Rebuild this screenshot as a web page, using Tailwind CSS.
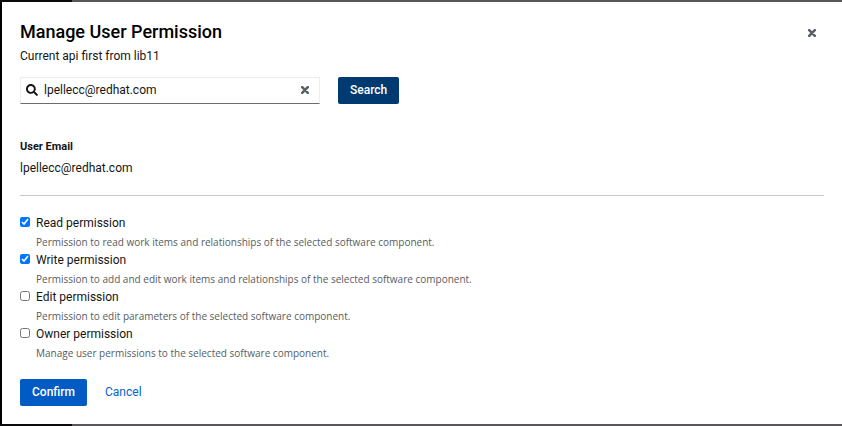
<!DOCTYPE html>
<html lang="en">
<head>
<meta charset="utf-8">
<meta name="viewport" content="width=device-width, initial-scale=1">
<title>Manage User Permission</title>
<script src="https://cdn.jsdelivr.net/npm/@tailwindcss/browser@4"></script>
</head>
<body class="min-h-screen flex flex-col bg-[linear-gradient(to_right,#0a0a0c_72px,#59575a_72px)] py-0.5 font-['Roboto','Liberation_Sans',sans-serif] text-[12px] leading-[18px] text-[#151515]">
<div class="flex-1 flex flex-col border-l-2 border-black bg-white pl-[18px] pr-[18px] pt-4" role="dialog" aria-labelledby="dialog-title" aria-describedby="dialog-description">
  <header class="flex items-start justify-between">
    <div>
      <h1 id="dialog-title" class="text-[18px] leading-7 font-medium text-black">Manage User Permission</h1>
      <p id="dialog-description" class="mt-px">Current api first from lib11</p>
    </div>
    <button type="button" aria-label="Close" class="size-6 mt-[3px] flex items-center justify-center text-[#5b6066]">
      <svg class="size-2" viewBox="0 0 8 8" fill="none" stroke="currentColor" stroke-width="2.6" stroke-linecap="round"><path d="M1.2 1.2 6.8 6.8M6.8 1.2 1.2 6.8"/></svg>
    </button>
  </header>

  <form class="mt-3 flex gap-[18px]" role="search">
    <div class="w-[300px] h-[27px] flex items-center border border-[#ededed] border-b-[#6a6e73] pl-[5px] pr-[3px] pb-0.5">
      <svg class="size-3 shrink-0" viewBox="0 0 512 512" fill="currentColor" aria-hidden="true"><path d="M505 442.700 405.300 343c-4.500-4.500-10.600-7-17-7H372c27.600-35.300 44-79.700 44-128C416 93.100 322.900 0 208 0S0 93.100 0 208s93.100 208 208 208c48.300 0 92.700-16.400 128-44v16.300c0 6.400 2.500 12.500 7 17l99.700 99.700c9.400 9.400 24.600 9.400 33.900 0l28.300-28.300c9.400-9.400 9.400-24.600.1-34zM208 336c-70.700 0-128-57.200-128-128 0-70.700 57.200-128 128-128 70.700 0 128 57.200 128 128 0 70.700-57.200 128-128 128z"/></svg>
      <input type="text" aria-label="User email" value="lpellecc@redhat.com" class="min-w-0 flex-1 pl-1.5 bg-transparent outline-none">
      <button type="button" aria-label="Clear search" class="size-[22px] flex items-center justify-center text-[#5b6066]">
        <svg class="size-2" viewBox="0 0 8 8" fill="none" stroke="currentColor" stroke-width="2.6" stroke-linecap="round"><path d="M1.2 1.2 6.8 6.8M6.8 1.2 1.2 6.8"/></svg>
      </button>
    </div>
    <button type="submit" class="h-[27px] px-3 pb-0.5 rounded-xs bg-[#003a70] font-medium text-white">Search</button>
  </form>

  <dl class="mt-[34px] pb-[18px] border-b border-[#c7c7c7]">
    <dt class="text-[11px] font-bold">User Email</dt>
    <dd class="mt-[3px]">lpellecc@redhat.com</dd>
  </dl>

  <form class="mt-[18px]">
    <div class="grid grid-cols-[10px_1fr] gap-x-1.5">
      <input id="read" type="checkbox" checked aria-describedby="read-help" class="size-2.5 mt-[3px]">
      <label for="read">Read permission</label>
      <p id="read-help" class="col-start-2 pt-px font-['Open_Sans','Roboto',sans-serif] text-[10px] leading-[18px] text-[#575c61]">Permission to read work items and relationships of the selected software component.</p>
      <input id="write" type="checkbox" checked aria-describedby="write-help" class="size-2.5 mt-[3px]">
      <label for="write">Write permission</label>
      <p id="write-help" class="col-start-2 pt-px font-['Open_Sans','Roboto',sans-serif] text-[10px] leading-[18px] text-[#575c61]">Permission to add and edit work items and relationships of the selected software component.</p>
      <input id="edit" type="checkbox" aria-describedby="edit-help" class="size-2.5 mt-[3px]">
      <label for="edit">Edit permission</label>
      <p id="edit-help" class="col-start-2 pt-px font-['Open_Sans','Roboto',sans-serif] text-[10px] leading-[18px] text-[#575c61]">Permission to edit parameters of the selected software component.</p>
      <input id="owner" type="checkbox" aria-describedby="owner-help" class="size-2.5 mt-[3px]">
      <label for="owner">Owner permission</label>
      <p id="owner-help" class="col-start-2 pt-px font-['Open_Sans','Roboto',sans-serif] text-[10px] leading-[18px] text-[#575c61]">Manage user permissions to the selected software component.</p>
    </div>
    <div class="mt-[17px] mb-[18px] flex gap-[6px]">
      <button type="submit" class="h-[27px] px-3 pb-0.5 rounded-xs bg-[#005bc4] font-medium text-white">Confirm</button>
      <button type="button" class="h-[27px] px-3 pb-0.5 text-[#0066cc]">Cancel</button>
    </div>
  </form>
</div>
</body>
</html>
